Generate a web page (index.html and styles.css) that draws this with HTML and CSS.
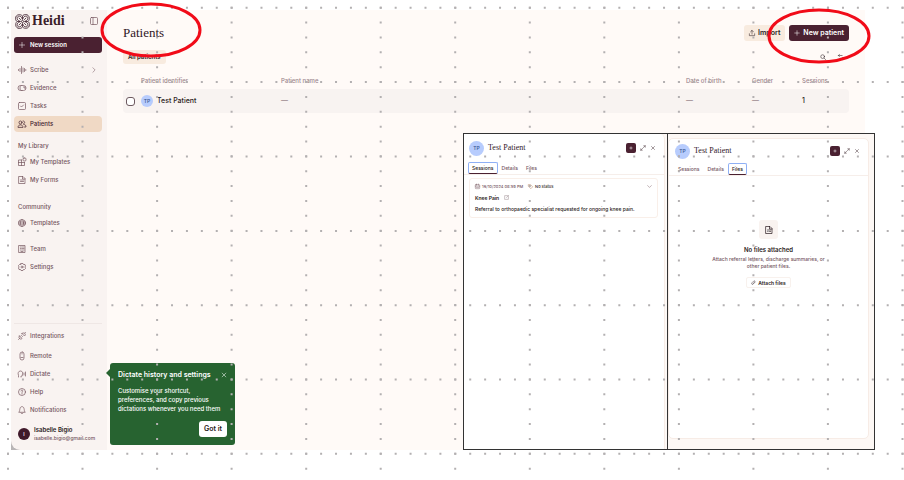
FILE: index.html
```html
<!DOCTYPE html>
<html lang="en">
<head>
<meta charset="utf-8">
<meta name="viewport" content="width=device-width, initial-scale=1">
<title>Heidi – Patients</title>
<link rel="stylesheet" href="styles.css">
</head>
<body>
<div class="board">
  <div class="app">
    <aside class="sidebar">
      <div class="brand">
        <svg class="brand-logo" viewBox="0 0 28 28"><path d="M14 4C10-1 1 1 1 8c0 3 1 5 3 6-5 4-3 13 4 13 3 0 5-1 6-3 4 5 13 3 13-4 0-3-1-5-3-6 5-4 3-13-4-13-3 0-5 1-6 3z"/><path d="M14 10C12 5 10 4 8 4 5 4 4 6 4 8s1 4 6 6c-5 2-6 4-6 6s1 4 4 4c2 0 4-1 6-6 2 5 4 6 6 6 3 0 4-2 4-4s-1-4-6-6c5-2 6-4 6-6s-1-4-4-4c-2 0-4 1-6 6z"/><path d="M7 7l4 4M21 7l-4 4M7 21l4-4M21 21l-4-4M14 4v6M14 18v6M4 14h6M18 14h6"/><circle cx="14" cy="14" r="2"/></svg>
        <span class="brand-name">Heidi</span>
        <button class="icon-btn" aria-label="Toggle sidebar"><svg class="icon" viewBox="0 0 16 16"><rect x="1" y="1" width="14" height="14" rx="2"/><path d="M6 1v14"/></svg></button>
      </div>
      <button class="new-session"><svg class="icon" viewBox="0 0 16 16"><path d="M8 1v14M1 8h14"/></svg>New session</button>
      <nav class="group first">
        <a class="item" href="#"><svg class="icon" viewBox="0 0 16 16"><path d="M1 7v2M4 5v6M7 1v14M10 4v8M13 5v6M15.500 7v2"/></svg>Scribe<svg class="icon chevron" viewBox="0 0 16 16"><path d="M5 2l6 6-6 6"/></svg></a>
        <a class="item" href="#"><svg class="icon" viewBox="0 0 16 16"><path d="M8 13H5A5 5 0 0 1 5 3h6a5 5 0 0 1 0 10H8"/><path d="M6 3c-3 2-3 8 0 10M12 5v3h3"/></svg>Evidence</a>
        <a class="item" href="#"><svg class="icon" viewBox="0 0 16 16"><rect x="1" y="1" width="14" height="14" rx="2"/><path d="M5 8l2 2 4-4"/></svg>Tasks</a>
        <a class="item current" href="#"><svg class="icon" viewBox="0 0 16 16"><circle cx="5" cy="5" r="3"/><path d="M0 14c0-6 10-6 10 0zM10 2c4-1 5 5 1 6M12 9c3 0 4 2 4 5h-3"/></svg>Patients</a>
      </nav>
      <h2 class="group-title">My Library</h2>
      <nav class="group">
        <a class="item" href="#"><svg class="icon" viewBox="0 0 16 16"><path d="M7 4H1v11h12V9M1 9h12M7 4v11"/><rect x="10" y="0" width="6" height="6" rx="2"/></svg>My Templates</a>
        <a class="item" href="#"><svg class="icon" viewBox="0 0 16 16"><path d="M2 1h8l4 4v10H2zM9 1v5h5M5 8h6M5 11h6"/></svg>My Forms</a>
      </nav>
      <h2 class="group-title community">Community</h2>
      <nav class="group">
        <a class="item" href="#"><svg class="icon" viewBox="0 0 16 16"><circle cx="8" cy="8" r="7"/><ellipse cx="8" cy="8" rx="3" ry="7"/><path d="M1 6h14M1 10h14"/></svg>Templates</a>
      </nav>
      <nav class="group team">
        <a class="item" href="#"><svg class="icon" viewBox="0 0 16 16"><path d="M2 1h12v14H2zM5 4h1M8 4h1M11 4h1M5 7h1M8 7h1M11 7h1M5 10h1M8 10h1M11 10h1M6 13h4"/></svg>Team</a>
        <a class="item" href="#"><svg class="icon" viewBox="0 0 16 16"><path d="M6 1h4l1 2 3 0 1 3-1 2 1 3-2 2-2 0-1 2H6l-1-2-3 0-1-3 1-2-1-3 2-2 2 0z"/><circle cx="8" cy="8" r="2"/></svg>Settings</a>
      </nav>
      <nav class="group footer">
        <a class="item integrations" href="#"><svg class="icon" viewBox="0 0 16 16"><path d="M1 15l2-2M3 8l5 5c-2 2-4 1-5 0s-2-3 0-5zM8 3l5 5c2-2 2-4 1-5s-4-2-6 0zM14 2l1-1M6 8l1-1M8 10l1-1"/></svg>Integrations</a>
        <a class="item" href="#"><svg class="icon" viewBox="0 0 16 16"><rect x="4" y="0" width="8" height="16" rx="4"/><path d="M8 3v1M6 11h4"/></svg>Remote</a>
        <a class="item" href="#"><svg class="icon" viewBox="0 0 16 16"><path d="M1 14v-3C-1 6 1 2 5 2s5 4 4 6c-1 3 1 4-2 4H6v2M12 6v4M15 4v8"/></svg>Dictate</a>
        <a class="item" href="#"><svg class="icon" viewBox="0 0 16 16"><circle cx="8" cy="8" r="7"/><path d="M6 6c0-3 4-2 4 0 0 1-2 1-2 3M8 11v1"/></svg>Help</a>
        <a class="item" href="#"><svg class="icon" viewBox="0 0 16 16"><path d="M2 12c2-2 1-4 2-7 1-5 7-5 8 0 1 3 0 5 2 7zM6 14c1 2 3 2 4 0"/></svg>Notifications</a>
      </nav>
      <div class="user">
        <span class="user-badge">I</span>
        <div class="user-text"><strong>Isabelle Bigio</strong><span>isabelle.bigio@gmail.com</span></div>
      </div>
    </aside>

    <main class="main">
      <header class="page-head">
        <h1>Patients</h1>
        <button class="btn soft"><svg class="icon" viewBox="0 0 16 16"><path d="M8 11V1M4 5l4-4 4 4M1 10v5h14v-5"/></svg>Import</button>
        <button class="btn dark"><svg class="icon" viewBox="0 0 16 16"><path d="M8 2v12M2 8h12"/></svg>New patient</button>
      </header>
      <div class="toolbar">
        <button class="pill">All patients</button>
        <button class="icon-btn" aria-label="Search"><svg class="icon" viewBox="0 0 16 16"><circle cx="7" cy="7" r="5"/><path d="M11 11l4 4"/></svg></button>
        <button class="icon-btn" aria-label="Sort"><svg class="icon" viewBox="0 0 16 16"><path d="M4 1L1 4l3 3M1 4h10M12 9l3 3-3 3M15 12H8"/></svg></button>
      </div>
      <table class="patients">
        <colgroup><col class="c-check"><col class="c-id"><col><col class="c-dob"><col class="c-gender"><col class="c-sessions"></colgroup>
        <thead><tr><th></th><th>Patient identifier</th><th>Patient name</th><th>Date of birth</th><th>Gender</th><th>Sessions</th></tr></thead>
        <tbody><tr>
          <td><input class="check" type="checkbox" aria-label="Select Test Patient"></td>
          <td><div class="who"><span class="avatar small">TP</span>Test Patient</div></td>
          <td class="empty">—</td><td class="empty">—</td><td class="empty">—</td><td>1</td>
        </tr></tbody>
      </table>
    </main>
  </div>

  <section class="tip">
    <div class="tip-head"><h2>Dictate history and settings</h2><button class="icon-btn" aria-label="Close"><svg class="icon" viewBox="0 0 16 16"><path d="M3 3l10 10M13 3L3 13"/></svg></button></div>
    <p>Customise your shortcut,<br>preferences, and copy previous<br>dictations whenever you need them</p>
    <button class="got-it">Got it</button>
  </section>

  <div class="panels">
    <section class="panel">
      <div class="sheet">
        <header class="sheet-head">
          <span class="avatar">TP</span><h2>Test Patient</h2>
          <button class="add" aria-label="Add"><svg class="icon" viewBox="0 0 16 16"><path d="M8 5v6M5 8h6"/></svg></button>
          <button class="icon-btn" aria-label="Expand"><svg class="icon" viewBox="0 0 16 16"><path d="M9 7l5-5M10 2h4v4M7 9l-5 5M2 10v4h4"/></svg></button>
          <button class="icon-btn" aria-label="Close"><svg class="icon" viewBox="0 0 16 16"><path d="M4 4l8 8M12 4l-8 8"/></svg></button>
        </header>
        <div class="tabs"><button class="tab active">Sessions</button><button class="tab">Details</button><button class="tab">Files</button></div>
        <article class="session">
          <div class="session-row meta">
            <svg class="icon" viewBox="0 0 16 16"><rect x="1" y="2" width="14" height="13" rx="2"/><path d="M1 7h14M5 0v4M11 0v4M4 11h8"/></svg><time>16/10/2024 08:59 PM</time>
            <svg class="icon tag" viewBox="0 0 16 16"><path d="M2 2h6l7 7-6 6-7-7zM5 5h1"/></svg><span class="status">No status</span>
            <button class="icon-btn" aria-label="Collapse"><svg class="icon" viewBox="0 0 16 16"><path d="M2 5l6 6 6-6"/></svg></button>
          </div>
          <div class="session-row"><strong>Knee Pain</strong><svg class="icon link" viewBox="0 0 16 16"><path d="M8 2H2v12h12V8M8 8l6-6M10 2h4v4"/></svg></div>
          <p class="session-row">Referral to orthopaedic specialist requested for ongoing knee pain.</p>
        </article>
      </div>
    </section>
    <section class="panel second">
      <div class="sheet">
        <header class="sheet-head">
          <span class="avatar">TP</span><h2>Test Patient</h2>
          <button class="add" aria-label="Add"><svg class="icon" viewBox="0 0 16 16"><path d="M8 5v6M5 8h6"/></svg></button>
          <button class="icon-btn" aria-label="Expand"><svg class="icon" viewBox="0 0 16 16"><path d="M9 7l5-5M10 2h4v4M7 9l-5 5M2 10v4h4"/></svg></button>
          <button class="icon-btn" aria-label="Close"><svg class="icon" viewBox="0 0 16 16"><path d="M4 4l8 8M12 4l-8 8"/></svg></button>
        </header>
        <div class="tabs"><button class="tab">Sessions</button><button class="tab">Details</button><button class="tab active">Files</button></div>
        <div class="no-files">
          <span class="file-box"><svg class="icon" viewBox="0 0 16 16"><path d="M2 1h8l4 4v10H2zM9 1v5h5M5 8h6M5 11h6"/></svg></span>
          <h3>No files attached</h3>
          <p>Attach referral letters, discharge summaries, or<br>other patient files.</p>
          <button class="attach"><svg class="icon" viewBox="0 0 16 16"><path d="M13 7l-6 6c-3 3-7-1-4-4l6-6c2-2 5 1 3 3l-6 6"/></svg>Attach files</button>
        </div>
      </div>
    </section>
  </div>

  <svg class="overlay" aria-hidden="true">
    <g class="dots">
      <path class="across" d="M0 7.700H2000M0 82.100H2000M0 156.500H2000M0 230.900H2000M0 305.200H2000M0 379.500H2000M0 453.700H2000"/>
      <path class="down" d="M8 0V2000M82.500 0V2000M157.100 0V2000M231.600 0V2000M306.200 0V2000M380.700 0V2000M455.200 0V2000M529.800 0V2000M604.300 0V2000M678.900 0V2000M753.400 0V2000M827.900 0V2000M902.500 0V2000"/>
    </g>
    <g class="marks"><ellipse cx="151" cy="30" rx="49" ry="26"/><ellipse cx="819" cy="36" rx="50" ry="26"/></g>
  </svg>
</div>
</body>
</html>
```
FILE: styles.css
```css
* { box-sizing: border-box; }
body { margin: 0; background: #fff; color: #2a1a20; font: 500 6px/8px Inter, "Liberation Sans", sans-serif; }
h1, h2, h3, p { margin: 0; }
button { padding: 0; border: 0; background: none; color: inherit; font: inherit; display: inline-flex; align-items: center; justify-content: center; white-space: nowrap; }
a { color: inherit; text-decoration: none; }
.icon { width: 8px; height: 8px; flex: none; fill: none; stroke: currentColor; stroke-width: 1.4; stroke-linecap: round; stroke-linejoin: round; overflow: visible; }
.board { position: relative; min-height: 100vh; padding: 10px 39px 30px 11px; overflow: hidden; }
.app { display: flex; min-height: calc(100vh - 40px); background: linear-gradient(90deg, #b9b5b6 20px, #fffaf7 20px); }

.sidebar { width: 96px; flex: none; display: flex; flex-direction: column; padding: 3px 5px 8px 3px; background: #f9f3f1; border-radius: 0 0 0 9px; color: #75565f; }
.brand { display: flex; align-items: center; height: 16px; margin-bottom: 8px; gap: 2px; color: #3c1d2a; }
.brand-logo { width: 15px; height: 15px; margin-left: 1px; fill: none; stroke: currentColor; stroke-width: 1.5; }
.brand-name { flex: 1; font: 700 14px/16px "Liberation Serif", serif; }
.brand .icon-btn { margin-right: 4px; color: #75565f; }
.new-session { height: 16px; justify-content: flex-start; gap: 4px; padding: 0 4px; border-radius: 3px; background: #4a2131; color: #fff; font-weight: 600; }
.new-session .icon { width: 8px; height: 6px; }
.group { display: flex; flex-direction: column; gap: 2px; }
.group.first { margin-top: 9px; }
.item { display: flex; align-items: center; gap: 4px; height: 16px; padding: 0 4px; border-radius: 4px; }
.item.current { background: #f0d9c5; color: #40202d; }
.chevron { width: 6px; height: 6px; margin-left: auto; margin-right: 1px; }
.group-title { margin: 8px 4px 2px; font: 500 6px/12px Inter, sans-serif; }
.group-title.community { margin-top: 13px; }
.group.team { margin-top: 10px; }
.group.footer { margin-top: auto; padding-top: 4px; border-top: 1px solid #efe7e5; }
.item.integrations { margin-bottom: 2px; }
.user { display: flex; align-items: center; gap: 4px; margin: 8px 0 0 4px; }
.user-badge { display: grid; place-items: center; width: 12px; height: 12px; border-radius: 50%; background: #40192a; color: #fff; font-size: 5px; }
.user-text { display: flex; flex-direction: column; font-size: 5px; }
.user-text strong { font-size: 6px; font-weight: 600; color: #2a1a20; }

.main { flex: 1; padding: 15px 16px; background: #fffaf7; }
.page-head { display: flex; align-items: center; gap: 4px; height: 16px; }
h1 { flex: 1; font: 400 13px/16px "Liberation Serif", serif; color: #30161f; }
.btn { height: 16px; gap: 3px; padding: 0 5px; border-radius: 3px; font-size: 7px; font-weight: 600; }
.btn .icon { width: 6px; height: 6px; }
.soft { background: #f8ebdf; }
.dark { background: #4a2131; color: #fff; }
.toolbar { display: flex; align-items: center; gap: 12px; margin-top: 9px; padding-right: 5px; }
.toolbar .icon { width: 6px; height: 6px; }
.pill { height: 14px; margin-right: auto; padding: 0 5px; border-radius: 3px; background: #f8ebdf; font-weight: 600; }
.patients { width: 100%; margin-top: 9px; border-collapse: collapse; table-layout: fixed; }
.c-check { width: 18px; } .c-id { width: 140px; } .c-dob { width: 66px; } .c-gender { width: 50px; } .c-sessions { width: 47px; }
th { height: 16px; padding: 0; text-align: left; font-weight: 500; color: #9b858b; }
td { height: 24px; padding: 0; background: #f8f3f1; font-size: 7px; }
td:first-child { border-radius: 4px 0 0 4px; }
td:last-child { border-radius: 0 4px 4px 0; }
.empty { color: #8f7b81; }
.check { display: block; appearance: none; width: 9px; height: 9px; margin: 0 0 0 3px; border: 1px solid #6d5a60; border-radius: 3px; background: #fff; }
.who { display: flex; align-items: center; gap: 4px; }
.avatar { display: grid; place-items: center; width: 15px; height: 15px; flex: none; border-radius: 50%; background: #b7ccfd; color: #36558f; font-size: 5px; }
.avatar.small { width: 12px; height: 12px; }

.tip { position: absolute; left: 110px; top: 363px; width: 125px; padding: 8px; border-radius: 3px; background: #276330; color: #fff; }
.tip::before { content: ""; position: absolute; left: -4px; top: 6px; border: solid transparent; border-width: 4px 4px 4px 0; border-right-color: #276330; }
.tip-head { display: flex; align-items: center; justify-content: space-between; }
.tip-head h2 { font: 600 7px/8px Inter, sans-serif; white-space: nowrap; }
.tip .icon { width: 6px; height: 6px; }
.tip p { margin: 7px 0 8px; line-height: 9px; white-space: nowrap; }
.got-it { display: flex; height: 16px; margin-left: auto; padding: 0 5px; border-radius: 3px; background: #fff; color: #2a1a20; font-size: 7px; font-weight: 600; }

.panels { position: absolute; left: 463px; top: 133px; width: 412px; height: 317px; display: grid; grid-template-columns: 203fr 207fr; border: 1px solid #333; background: #fff; font-size: 5px; line-height: 8px; }
.panel { display: flex; padding-right: 2px; background: #fdf8f5; }
.panel.second { padding: 4px 5px 10px 0; border-left: 1px solid #333; }
.sheet { flex: 1; background: #fff; border-right: 1px solid #f7ece6; border-radius: 0 5px 0 0; }
.second .sheet { border: 1px solid #f7ece6; border-radius: 5px; }
.sheet-head { display: flex; align-items: center; gap: 4px; height: 28px; padding: 0 8px 0 5px; }
.second .sheet-head { height: 24px; padding-left: 6px; }
.sheet-head h2 { flex: 1; font: 400 8px/12px "Liberation Serif", serif; color: #30161f; }
.sheet-head .icon { width: 6px; height: 6px; }
.sheet-head .icon-btn { color: #4c3a40; }
.add { width: 10px; height: 10px; border-radius: 2px; background: #4a2131; color: #fff; }
.tabs { display: flex; padding: 0 4px; border-bottom: 1px solid #f6eeea; color: #75565f; }
.second .tabs { padding-left: 5px; }
.tab { height: 12px; padding: 0 3px; border: 1px solid transparent; border-radius: 2px; }
.tab.active { border-color: #8fb0f5; border-bottom-color: #4a2131; color: #2a1a20; }
.session { margin: 3px 6px 0 5px; padding: 2px 5px 3px; border: 1px solid #f9efe9; border-radius: 3px; }
.session-row { display: flex; align-items: center; gap: 2px; height: 11px; white-space: nowrap; }
.session .icon { width: 5px; height: 5px; }
.session strong { font-weight: 600; }
.meta { color: #75565f; font-size: 4px; }
.meta .icon-btn { margin-left: auto; }
.tag { margin-left: 3px; color: #ad7044; }
.status { color: #2a1a20; }
.link { margin-left: 3px; color: #8f7b81; }
.no-files { display: flex; flex-direction: column; align-items: center; padding-top: 44px; text-align: center; color: #75565f; }
.file-box { display: grid; place-items: center; width: 19px; height: 19px; border-radius: 3px; background: #f9f3f0; color: #2a1a20; }
.no-files h3 { margin: 7px 0 2px; font: 600 6px/8px Inter, sans-serif; color: #2a1a20; }
.no-files p { line-height: 7px; }
.attach { height: 11px; gap: 2px; margin-top: 7px; padding: 0 4px; border: 1px solid #f8f1ed; border-radius: 2px; color: #2a1a20; font-weight: 600; }
.attach .icon { width: 5px; height: 5px; }

.overlay { position: absolute; inset: 0; width: 100%; height: 100%; pointer-events: none; fill: none; }
.dots { stroke: #b3b0b1; stroke-width: 2; }
.across { stroke-dasharray: 2 12.91; stroke-dashoffset: 7.9; }
.down { stroke-dasharray: 2 12.87; stroke-dashoffset: 8.2; }
.marks { stroke: #f10b18; stroke-width: 3; }
```
